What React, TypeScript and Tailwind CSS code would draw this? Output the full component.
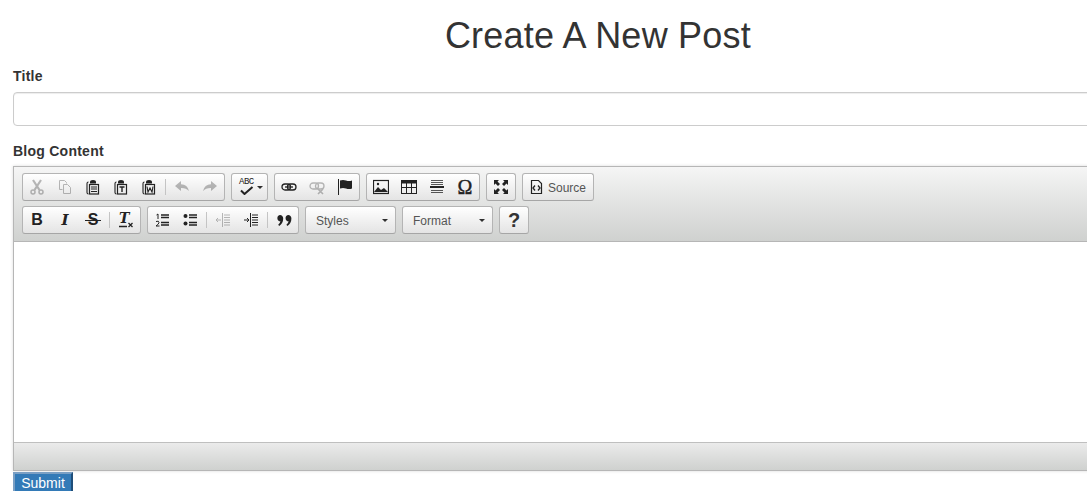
import type { ReactNode } from "react";

const sans = "font-['Liberation_Sans',Arial,sans-serif]";

function Icon({ children, faded }: { children: ReactNode; faded?: boolean }) {
  return (
    <svg
      viewBox="0 0 16 16"
      className={`h-4 w-4 ${faded ? "opacity-30" : ""}`}
      fill="none"
      stroke="#222"
      strokeWidth="1"
    >
      {children}
    </svg>
  );
}

function Btn({ children }: { children: ReactNode }) {
  return (
    <span className="flex h-[26px] w-7 items-center justify-center">
      {children}
    </span>
  );
}

function Sep() {
  return <span className="mx-[2px] h-4 w-px bg-[#c4c4c4]" />;
}

function Group({ children, className = "" }: { children: ReactNode; className?: string }) {
  return (
    <div
      className={`flex h-7 items-center rounded-[3px] border border-[#b4b4b4] border-b-[#a6a6a6] bg-gradient-to-b from-white to-[#e4e4e4] ${className}`}
    >
      {children}
    </div>
  );
}

function Combo({ label }: { label: string }) {
  return (
    <Group className="w-[91px] justify-between pl-[10px] pr-[7px]">
      <span className="pt-px text-[12px] leading-[14px] text-[#555]">{label}</span>
      <span className="h-0 w-0 border-x-[3px] border-t-[3px] border-x-transparent border-t-[#2f2f2f]" />
    </Group>
  );
}

function Clipboard({ children }: { children: ReactNode }) {
  return (
    <Icon>
      <path d="M3.500 3q-1.500 0-1.500 1.500v9q0 1.500 1.500 1.500" strokeWidth="1.100" />
      <path d="M5 3q0-2 3-2t3 2v1.500H5z" fill="#222" stroke="none" />
      <rect x="4.500" y="5.500" width="9" height="9.500" strokeWidth="1.200" fill="#fff" fillOpacity="0" />
      {children}
    </Icon>
  );
}

export default function App() {
  return (
    <div className={`h-[491px] w-[1087px] overflow-hidden bg-white ${sans} text-[14px] text-[#333]`}>
      <div className="ml-[13px] w-[1170px]">
        <h1 className="pt-4 pb-[10px] text-center text-[36px] leading-[40px] font-normal tracking-[0.24px]">
          Create A New Post
        </h1>
        <label className="mb-[6px] block text-[14px] leading-[20px] font-bold tracking-[0.25px]">Title</label>
        <div className="mb-[15px] h-[34px] rounded border border-[#ccc] bg-white shadow-[inset_0_1px_1px_rgba(0,0,0,0.075)]" />
        <label className="mb-[5px] block text-[14px] leading-[20px] font-bold tracking-[0.25px]">Blog Content</label>

        <div className="h-[305px] border border-[#b6b6b6] shadow-[0_0_3px_rgba(0,0,0,0.15)]">
          <div className="flex h-[75px] flex-col gap-[5px] border-b border-[#b6b6b6] bg-gradient-to-b from-[#f5f5f5] to-[#cfd1cf] pt-[6px] pl-2">
            <div className="flex gap-[6px]">
              <Group>
                <Btn>
                  <Icon faded>
                    <path d="M4 1l6.500 10M12 1L5.500 11" strokeWidth="2.200" />
                    <circle cx="4" cy="13" r="2" strokeWidth="1.500" />
                    <circle cx="12" cy="13" r="2" strokeWidth="1.500" />
                  </Icon>
                </Btn>
                <Btn>
                  <Icon faded>
                    <path d="M2.500 1.500h5l2 2v1M2.500 1.500v9h3" />
                    <path d="M6.500 5.500h4l3 3v6h-7z" />
                  </Icon>
                </Btn>
                <Btn>
                  <Clipboard>
                    <path d="M6 8h6M6 10h6M6 12.500h6" strokeWidth="1.200" />
                  </Clipboard>
                </Btn>
                <Btn>
                  <Clipboard>
                    <path d="M6.500 8h5M9 8v5" strokeWidth="1.400" />
                  </Clipboard>
                </Btn>
                <Btn>
                  <Clipboard>
                    <path d="M6 7.500l1 5.500 2-4 2 4 1-5.500" strokeWidth="1.100" />
                  </Clipboard>
                </Btn>
                <Sep />
                <Btn>
                  <Icon faded>
                    <path d="M1 7l6-5v3.200q6.500 .3 8 6.800-3-3.200-8-3V12z" fill="#222" stroke="none" />
                  </Icon>
                </Btn>
                <Btn>
                  <Icon faded>
                    <path d="M15 7L9 2v3.200Q2.500 5.500 1 12q3-3.200 8-3V12z" fill="#222" stroke="none" />
                  </Icon>
                </Btn>
              </Group>
              <Group className="w-[37px] pl-[7px]">
                <span className="relative block h-4 w-[15px]">
                  <span className="absolute top-[-2px] left-0 font-['Liberation_Mono',monospace] text-[9px] leading-[11px] tracking-[-0.5px] text-[#222]">
                    ABC
                  </span>
                  <svg viewBox="0 0 16 16" className="absolute top-0 left-0 h-4 w-4" fill="none">
                    <path d="M2 11.500l3.500 3.500 8-7" stroke="#222" strokeWidth="2" />
                  </svg>
                </span>
                <span className="ml-[3px] h-0 w-0 border-x-[3px] border-t-[3px] border-x-transparent border-t-[#2f2f2f]" />
              </Group>
              <Group>
                <Btn>
                  <Icon>
                    <rect x="1" y="5" width="8.500" height="6" rx="3" strokeWidth="1.300" />
                    <rect x="6.500" y="5" width="8.500" height="6" rx="3" strokeWidth="1.300" />
                    <path d="M4 8h8" strokeWidth="1.300" />
                  </Icon>
                </Btn>
                <Btn>
                  <Icon faded>
                    <rect x="1" y="4" width="8.500" height="6" rx="3" strokeWidth="1.300" />
                    <rect x="6.500" y="4" width="8.500" height="6" rx="3" strokeWidth="1.300" />
                    <path d="M9 10l5 5M14 10l-5 5" strokeWidth="1.600" />
                  </Icon>
                </Btn>
                <Btn>
                  <Icon>
                    <path d="M1.500 0v16" strokeWidth="1" />
                    <path d="M3 1.500q3-1 6 0t6 0v8q-3 1-6 0t-6 0z" fill="#222" stroke="none" />
                  </Icon>
                </Btn>
              </Group>
              <Group>
                <Btn>
                  <Icon>
                    <rect x="0.500" y="1.500" width="15" height="13" strokeWidth="1.200" />
                    <path d="M1 13l4-5 3 3 3-2 4 4z" fill="#222" stroke="none" />
                    <circle cx="5" cy="5" r="1.200" fill="#222" stroke="none" />
                  </Icon>
                </Btn>
                <Btn>
                  <Icon>
                    <rect x="0.500" y="1.500" width="15" height="13" />
                    <path d="M0 3h16" strokeWidth="3" />
                    <path d="M5.500 2v12M10.500 2v12M1 8.500h14" />
                  </Icon>
                </Btn>
                <Btn>
                  <Icon>
                    <path d="M2 1.500h12M2 3.500h12M2 5.500h12M2 11.500h12M2 13.500h12" strokeOpacity="0.75" />
                    <path d="M1 8h14" strokeWidth="2" />
                  </Icon>
                </Btn>
                <Btn>
                  <span className="font-['Liberation_Serif',serif] text-[20px] leading-none text-[#222] [-webkit-text-stroke:0.4px_#222]">Ω</span>
                </Btn>
              </Group>
              <Group>
                <Btn>
                  <Icon>
                    <path d="M1 1h5L4.500 2.500l2.500 2.500-2 2-2.500-2.500L1 6zM15 1v5l-1.500-1.500L11 7 9 5l2.500-2.500L10 1zM1 15v-5l1.500 1.500L5 9l2 2-2.500 2.500L6 15zM15 15h-5l1.500-1.500L9 11l2-2 2.500 2.500L15 10z" fill="#222" stroke="none" />
                  </Icon>
                </Btn>
              </Group>
              <Group className="w-[72px] pl-[6px]">
                <Icon>
                  <path d="M2.500 1.500h7l3 3v10h-10z" strokeWidth="1.200" />
                  <path d="M6 6.500L4 9l2 2.500M9 6.500L11 9l-2 2.500" strokeWidth="1.300" />
                </Icon>
                <span className="ml-[3px] pt-px text-[12px] leading-[14px] text-[#555]">Source</span>
              </Group>
            </div>
            <div className="flex gap-[6px]">
              <Group>
                <Btn>
                  <span className="text-[16px] leading-none font-bold text-[#222]">B</span>
                </Btn>
                <Btn>
                  <span className="font-['DejaVu_Serif',serif] text-[15px] leading-none font-bold text-[#222] italic">I</span>
                </Btn>
                <Btn>
                  <span className="relative text-[16px] leading-none font-bold text-[#222]">
                    S
                    <span className="absolute top-[8px] left-[-3px] h-px w-4 bg-[#222]" />
                  </span>
                </Btn>
                <Sep />
                <Btn>
                  <span className="relative block h-4 w-4">
                    <span className="absolute left-[1px] top-[-1px] font-['DejaVu_Serif',serif] text-[14px] leading-[15px] font-bold text-[#222] italic">T</span>
                    <svg viewBox="0 0 16 16" className="absolute top-0 left-0 h-4 w-4" fill="none">
                      <path d="M1 14.500h8" stroke="#222" strokeWidth="1.500" />
                      <path d="M10.500 11l4 4M14.500 11l-4 4" stroke="#222" strokeWidth="1.300" />
                    </svg>
                  </span>
                </Btn>
              </Group>
              <Group>
                <Btn>
                  <Icon>
                    <path d="M2.500 3l1.500-1v5" strokeWidth="1" />
                    <path d="M2 9.500q3-1 3 .8T2 14h3.500" strokeWidth="1" />
                    <path d="M7 3h8M7 5.500h8M7 10.500h8M7 13h8" strokeWidth="1.400" />
                  </Icon>
                </Btn>
                <Btn>
                  <Icon>
                    <circle cx="3.500" cy="4" r="2" fill="#222" stroke="none" />
                    <circle cx="3.500" cy="11.500" r="2" fill="#222" stroke="none" />
                    <path d="M7 3h8M7 5.500h8M7 10.500h8M7 13h8" strokeWidth="1.400" />
                  </Icon>
                </Btn>
                <Sep />
                <Btn>
                  <Icon faded>
                    <path d="M1 8h5M3 6L1 8l2 2M7.500 1v14" />
                    <path d="M9 3h6M9 5.500h6M9 8h6M9 10.500h6M9 13h6" />
                  </Icon>
                </Btn>
                <Btn>
                  <Icon>
                    <path d="M1 8h5M4 6l2 2-2 2M7.500 1v14" />
                    <path d="M9 3h6M9 5.500h6M9 8h6M9 10.500h6M9 13h6" />
                  </Icon>
                </Btn>
                <Sep />
                <Btn>
                  <Icon>
                    <path d="M3.800 3a3.200 3.200 0 0 1 3.400 3.400q0 4.600-4 7.600l-1-1.200q2-1.800 2.200-3.500A3.200 3.200 0 0 1 3.800 3zM12 3a3.200 3.200 0 0 1 3.400 3.400q0 4.600-4 7.600l-1-1.200q2-1.800 2.200-3.500A3.200 3.200 0 0 1 12 3z" fill="#222" stroke="none" />
                  </Icon>
                </Btn>
              </Group>
              <Combo label="Styles" />
              <Combo label="Format" />
              <Group className="w-[30px] justify-center">
                <span className="text-[20px] leading-none font-bold text-[#333]">?</span>
              </Group>
            </div>
          </div>
          <div className="h-[200px] bg-white" />
          <div className="h-7 border-t border-[#bfbfbf] bg-gradient-to-b from-[#ebebeb] to-[#cfd1cf]" />
        </div>

        <button className="mt-[1px] block h-[22px] w-[60px] border-2 border-t-[#7a9fc4] border-r-[#1f4e79] border-b-[#1f4e79] border-l-[#7a9fc4] bg-[#337ab7] text-[14px] leading-[18px] text-white">
          Submit
        </button>
      </div>
    </div>
  );
}
